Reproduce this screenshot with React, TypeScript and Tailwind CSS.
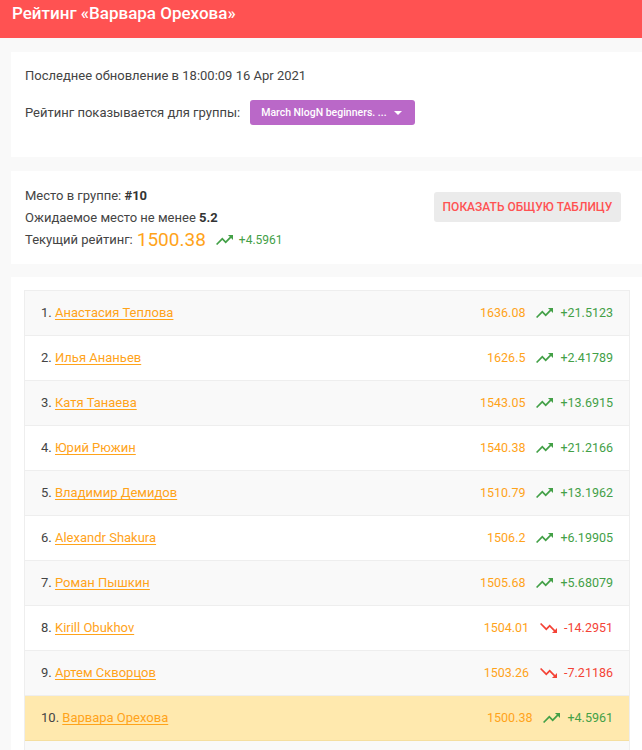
import React from 'react';

type Row = { place: number; name: string; rating: string; delta: string; up: boolean; me?: boolean };

const rows: Row[] = [
  { place: 1, name: 'Анастасия Теплова', rating: '1636.08', delta: '+21.5123', up: true },
  { place: 2, name: 'Илья Ананьев', rating: '1626.5', delta: '+2.41789', up: true },
  { place: 3, name: 'Катя Танаева', rating: '1543.05', delta: '+13.6915', up: true },
  { place: 4, name: 'Юрий Рюжин', rating: '1540.38', delta: '+21.2166', up: true },
  { place: 5, name: 'Владимир Демидов', rating: '1510.79', delta: '+13.1962', up: true },
  { place: 6, name: 'Alexandr Shakura', rating: '1506.2', delta: '+6.19905', up: true },
  { place: 7, name: 'Роман Пышкин', rating: '1505.68', delta: '+5.68079', up: true },
  { place: 8, name: 'Kirill Obukhov', rating: '1504.01', delta: '-14.2951', up: false },
  { place: 9, name: 'Артем Скворцов', rating: '1503.26', delta: '-7.21186', up: false },
  { place: 10, name: 'Варвара Орехова', rating: '1500.38', delta: '+4.5961', up: true, me: true },
];

const Trend = ({ up }: { up: boolean }) => (
  <svg viewBox="2 4 20 16" className={`w-[17px] h-[14px] ${up ? 'fill-[#43a047]' : 'fill-[#f44336]'}`}>
    {up ? (
      <path d="M16 6l2.29 2.29-4.88 4.88-4-4L2 16.59 3.41 18l6-6 4 4 6.3-6.29L22 12V6z" />
    ) : (
      <path d="M16 18l2.29-2.29-4.88-4.88-4 4L2 7.41 3.41 6l6 6 4-4 6.3 6.29L22 12v6z" />
    )}
  </svg>
);

const App: React.FC = () => {
  return (
    <div className="min-h-[750px] bg-[#f9f9f9] font-['Roboto',sans-serif] text-[#444] text-[13px]">
      <header className="h-[38px] bg-[#ff5252] px-3 flex items-start">
        <h1 className="text-white text-[17px] font-medium leading-[26px]">Рейтинг «Варвара Орехова»</h1>
      </header>

      <section className="ml-[11px] mt-[14px] bg-white px-[14px] pt-[15px] h-[105px]">
        <p className="leading-[18px]">Последнее обновление в 18:00:09 16 Apr 2021</p>
        <div className="flex items-center mt-[15px]">
          <span>Рейтинг показывается для группы:</span>
          <button className="ml-[10px] h-[25px] w-[165px] rounded-[3px] bg-[#ba68c8] text-white text-[10.5px] font-medium flex items-center pl-[11px] pr-[13px] justify-between whitespace-nowrap">
            <span>March NlogN beginners. ...</span>
            <span className="w-0 h-0 border-l-[4px] border-r-[4px] border-t-[4px] border-l-transparent border-r-transparent border-t-white" />
          </button>
        </div>
      </section>

      <section className="ml-[11px] mt-[14px] bg-white px-[14px] h-[93px] flex items-start">
        <div className="flex-1 pt-[14px] leading-[22px]">
          <p>Место в группе: <b className="font-bold text-[#333]">#10</b></p>
          <p>Ожидаемое место не менее <b className="font-bold text-[#333]">5.2</b></p>
          <p className="flex items-center">
            <span>Текущий рейтинг:</span>
            <span className="ml-[4px] text-[19px] text-[#ffa31a]">1500.38</span>
            <span className="ml-[10px]"><Trend up /></span>
            <span className="ml-[6px] text-[12px] text-[#43a047]">+4.5961</span>
          </p>
        </div>
        <button className="mt-[21px] mr-[7px] h-[30px] w-[187px] rounded-[3px] bg-[#ebebeb] text-[#ff5252] text-[12px] font-medium uppercase">
          Показать общую таблицу
        </button>
      </section>

      <section className="ml-[11px] mt-[13px] bg-white pl-[13px] pt-[13px]">
        <div className="w-[606px] border border-[#eee] border-b-0">
          {rows.map((r, i) => (
            <div
              key={r.place}
              className={`h-[45px] flex items-center pl-[16px] pr-[16px] border-b ${
                r.me ? 'bg-[#ffe9ae] border-[#f5dfa0]' : i % 2 === 0 ? 'bg-[#f9f9f9] border-[#eee]' : 'bg-white border-[#eee]'
              }`}
            >
              <span className="flex-1">
                {r.place}. <a href="#" className="text-[#ffa31a] underline underline-offset-2">{r.name}</a>
              </span>
              <span className="text-[12.5px] text-[#ffa31a]">{r.rating}</span>
              <span className="ml-[11px]"><Trend up={r.up} /></span>
              <span className={`ml-[7px] text-[12.5px] ${r.up ? 'text-[#43a047]' : 'text-[#f44336]'}`}>{r.delta}</span>
            </div>
          ))}
          <div className="h-[45px] bg-[#f9f9f9]" />
        </div>
      </section>
    </div>
  );
};

export default App;
